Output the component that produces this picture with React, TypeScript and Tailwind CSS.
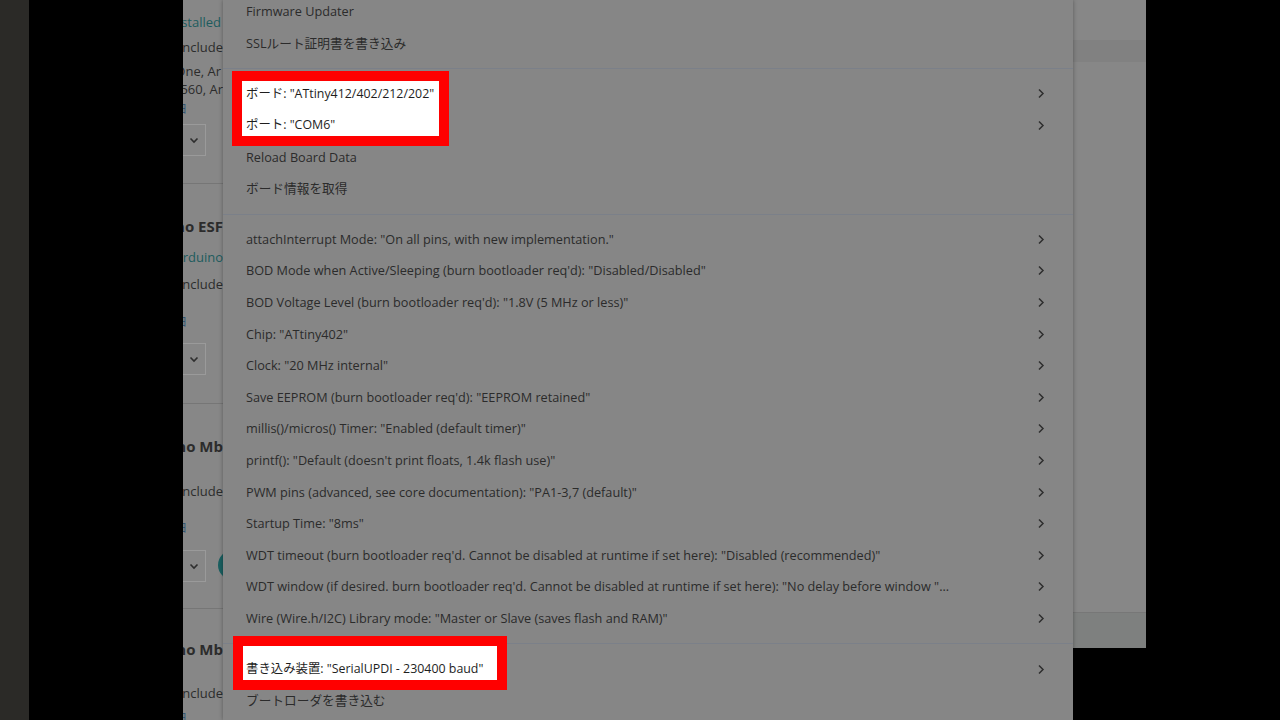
import React from 'react';

type Item = { label: string; sub?: boolean; mark?: 'board' | 'programmer' } | 'sep';

const items: Item[] = [
  { label: 'Firmware Updater' },
  { label: 'SSLルート証明書を書き込み' },
  'sep',
  { label: 'ボード: "ATtiny412/402/212/202"', sub: true, mark: 'board' },
  { label: 'ポート: "COM6"', sub: true, mark: 'board' },
  { label: 'Reload Board Data' },
  { label: 'ボード情報を取得' },
  'sep',
  { label: 'attachInterrupt Mode: "On all pins, with new implementation."', sub: true },
  { label: 'BOD Mode when Active/Sleeping (burn bootloader req\'d): "Disabled/Disabled"', sub: true },
  { label: 'BOD Voltage Level (burn bootloader req\'d): "1.8V (5 MHz or less)"', sub: true },
  { label: 'Chip: "ATtiny402"', sub: true },
  { label: 'Clock: "20 MHz internal"', sub: true },
  { label: 'Save EEPROM (burn bootloader req\'d): "EEPROM retained"', sub: true },
  { label: 'millis()/micros() Timer: "Enabled (default timer)"', sub: true },
  { label: 'printf(): "Default (doesn\'t print floats, 1.4k flash use)"', sub: true },
  { label: 'PWM pins (advanced, see core documentation): "PA1-3,7 (default)"', sub: true },
  { label: 'Startup Time: "8ms"', sub: true },
  { label: 'WDT timeout (burn bootloader req\'d. Cannot be disabled at runtime if set here): "Disabled (recommended)"', sub: true },
  { label: 'WDT window (if desired. burn bootloader req\'d. Cannot be disabled at runtime if set here): "No delay before window "...', sub: true },
  { label: 'Wire (Wire.h/I2C) Library mode: "Master or Slave (saves flash and RAM)"', sub: true },
  'sep',
  { label: '書き込み装置: "SerialUPDI - 230400 baud"', sub: true, mark: 'programmer' },
  { label: 'ブートローダを書き込む' },
];

const font = { fontFamily: '"Open Sans", "Noto Sans CJK JP", sans-serif' };
const jp = { fontFamily: '"Noto Sans CJK JP", sans-serif' };

const Chevron = () => (
  <svg width="8" height="11" viewBox="0 0 8 11" className="shrink-0">
    <path d="M2 1.5 L6 5.5 L2 9.5" fill="none" stroke="#2e2e2e" strokeWidth="1.5" />
  </svg>
);

const Row = ({ label, sub, lit }: { label: string; sub?: boolean; lit?: boolean }) => (
  <div className="h-[31.6px] flex items-center justify-between pl-[23px] pr-[28px]">
    <span
      className={`relative z-10 whitespace-nowrap ${
        lit ? 'text-[12.4px] text-[#1e1e1e]' : 'text-[12.7px] text-[#2b2b2b]'
      }`}
    >
      {label}
    </span>
    {sub && <Chevron />}
  </div>
);

// 左側に見えているボードマネージャの切れ端
const Line = ({ h, children, cls = '' }: { h: string; children: React.ReactNode; cls?: string }) => (
  <div className={`${h} flex items-center justify-end whitespace-nowrap ${cls}`}>{children}</div>
);

const More = ({ h }: { h: string }) => (
  <div className={`${h} flex items-center whitespace-nowrap text-[#2a4e6e] text-[11px]`}>
    <span className="-ml-[19px]" style={jp}>詳細</span>
  </div>
);

const SelectStub = () => (
  <div className="h-[32px] w-[23px] shrink-0 border border-l-0 border-[#9a9a9a] flex items-center justify-center">
    <svg width="10" height="7" viewBox="0 0 10 7">
      <path d="M1.5 1.5 L5 5 L8.5 1.5" fill="none" stroke="#2e2e2e" strokeWidth="1.6" />
    </svg>
  </div>
);

const LeftStrip = () => (
  <div className="w-[40px] shrink-0 overflow-hidden text-[13px] text-[#2c2c2c]" style={font}>
    {/* card 1 */}
    <div className="h-[13px]" />
    <Line h="h-[20px]" cls="text-[#1d5c5e] pr-[2px]">installed</Line>
    <Line h="h-[30px]">Boards include</Line>
    <Line h="h-[18px]" cls="pr-[2px]">Uno, One, Ar</Line>
    <Line h="h-[18px]">Mega 2560, Ar</Line>
    <More h="h-[18px]" />
    <div className="h-[7px]" />
    <SelectStub />
    <div className="h-[27px]" />
    <div className="h-px bg-[#767676]" />
    {/* card 2 */}
    <div className="h-[30px]" />
    <Line h="h-[24px]" cls="font-bold text-[15px]">Arduino ESF</Line>
    <div className="h-[8px]" />
    <Line h="h-[24px]" cls="text-[#1d5c5e]">by Arduino</Line>
    <Line h="h-[30px]">Boards include</Line>
    <More h="h-[42px]" />
    <div className="h-[1px]" />
    <SelectStub />
    <div className="h-[28px]" />
    <div className="h-px bg-[#767676]" />
    {/* card 3 */}
    <div className="h-[30px]" />
    <Line h="h-[24px]" cls="font-bold text-[15px]">Arduino Mb</Line>
    <div className="h-[22px]" />
    <Line h="h-[24px]">Boards include</Line>
    <More h="h-[46px]" />
    <div className="h-[30px] flex">
      <SelectStub />
      <div className="ml-[12px] w-[30px] h-[30px] rounded-full bg-[#1a5f60] shrink-0" />
    </div>
    <div className="h-[28px]" />
    <div className="h-px bg-[#767676]" />
    {/* card 4 */}
    <div className="h-[28px]" />
    <Line h="h-[24px]" cls="font-bold text-[15px]">Arduino Mb</Line>
    <div className="h-[21px]" />
    <Line h="h-[24px]">Boards include</Line>
    <More h="h-[22px]" />
  </div>
);

const Menu = () => {
  const rows: React.ReactNode[] = [];
  let i = 0;
  while (i < items.length) {
    const it = items[i];
    if (it === 'sep') {
      rows.push(
        <div key={i} className="py-[9px]">
          <div className="h-px bg-[#7b8089]" />
        </div>
      );
      i++;
      continue;
    }
    if (it.mark === 'board') {
      const a = it;
      const b = items[i + 1] as { label: string; sub?: boolean };
      rows.push(
        <div key={i} className="relative">
          <div className="absolute left-[9px] -top-[7px] -bottom-[5px] w-[217px] border-[10px] border-[#ff0000] bg-white" />
          <Row label={a.label} sub={a.sub} lit />
          <Row label={b.label} sub={b.sub} lit />
        </div>
      );
      i += 2;
      continue;
    }
    if (it.mark === 'programmer') {
      rows.push(
        <div key={i} className="relative">
          <div className="absolute left-[10px] -top-[17px] -bottom-[5px] w-[274px] border-[10px] border-[#ff0000] bg-white" />
          <Row label={it.label} sub={it.sub} lit />
        </div>
      );
      i++;
      continue;
    }
    rows.push(<Row key={i} label={it.label} sub={it.sub} />);
    i++;
  }
  return (
    <div
      className="w-[850px] shrink-0 h-[720px] overflow-hidden bg-[#868686] shadow-[0_0_4px_rgba(0,0,0,0.35)] relative z-10"
      style={font}
    >
      <div className="-mt-[4px]">{rows}</div>
    </div>
  );
};

const RightStrip = () => (
  <div className="w-[73px] shrink-0 flex flex-col">
    <div className="h-[40px] bg-[#878787]" />
    <div className="h-[22px] bg-[#818181]" />
    <div className="h-[550px] bg-[#878787]" />
    <div className="h-px bg-[#777777]" />
    <div className="h-[35px] bg-[#7e807f]" />
    <div className="flex-1 bg-black" />
  </div>
);

export default function App() {
  return (
    <div className="w-[1280px] h-[720px] flex overflow-hidden bg-black">
      <div className="w-[29px] shrink-0 bg-[#2b2a27]" />
      <div className="w-[154px] shrink-0 bg-black" />
      <div className="flex shrink-0 bg-[#878787]">
        <LeftStrip />
        <Menu />
      </div>
      <RightStrip />
      <div className="flex-1 bg-black" />
    </div>
  );
}
